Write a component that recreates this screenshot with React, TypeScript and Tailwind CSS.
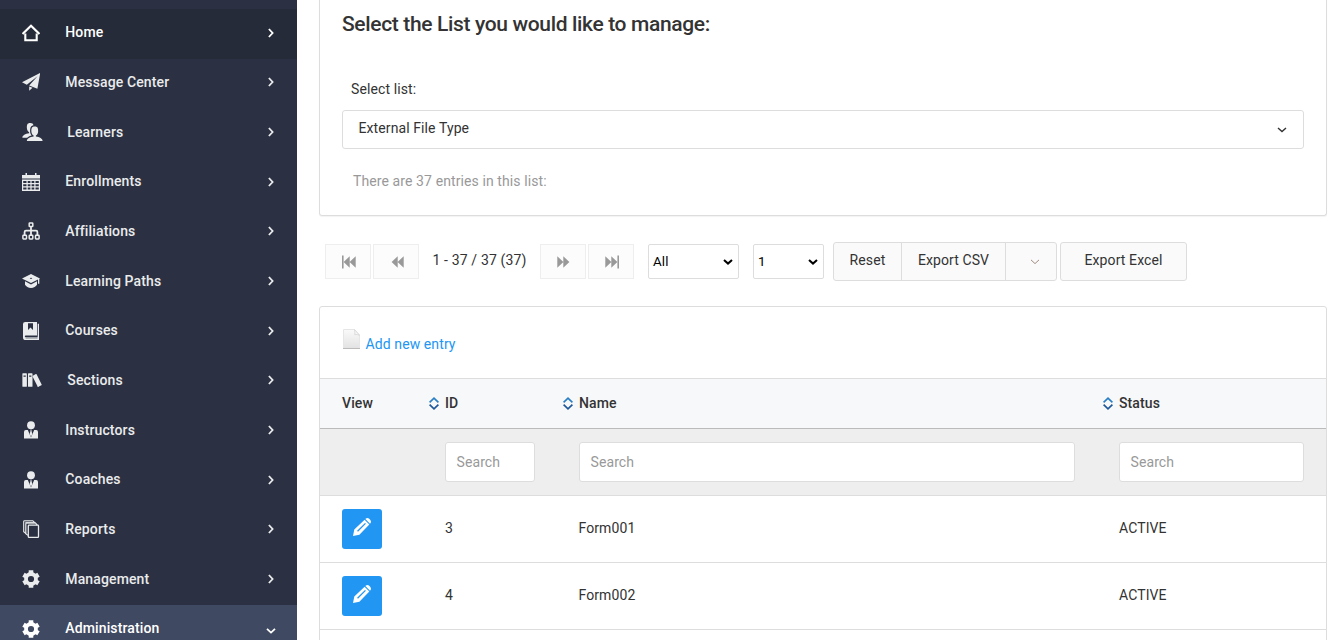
import React from 'react';
import { ImBooks, ImUsers } from 'react-icons/im';

type IconProps = { className?: string };

const HomeIcon = ({ className }: IconProps) => (
  <svg viewBox="0 0 18 18" className={className} fill="none" stroke="currentColor" strokeWidth="2.1">
    <path d="M0.600 10 9 1.800l8.400 8.200" />
    <path d="M3.300 9.600v6.600h11.400V9.600" />
  </svg>
);

const PlaneIcon = ({ className }: IconProps) => (
  <svg viewBox="0 0 18 18" className={className} fill="currentColor">
    <path d="M18.200 0 0 9.200l4.800 2.500L15.500 3.200 7.200 12.600l8.200 3.200z" />
    <path d="M7.200 13.500v4.200l3.300-3z" />
  </svg>
);

const CalendarIcon = ({ className }: IconProps) => (
  <svg viewBox="0 0 18 18" className={className} fill="currentColor">
    <path d="M3.500 0h1.500v3H3.500zM13 0h1.500v3H13z" />
    <path
      fillRule="evenodd"
      d="M0 2h18v3.600H0zM0 6.500h18V18H0zM1.200 7.900v2.200h3.300V7.900zM5.700 7.900v2.200h2.700V7.900zM9.600 7.900v2.200h2.700V7.900zM13.500 7.900v2.200h3.300V7.900zM1.200 11.200v2.100h3.300v-2.100zM5.700 11.200v2.100h2.700v-2.100zM9.600 11.200v2.100h2.700v-2.100zM13.500 11.200v2.100h3.300v-2.100zM1.200 14.400v2.100h3.300v-2.100zM5.700 14.400v2.100h2.700v-2.100zM9.600 14.400v2.100h2.700v-2.100zM13.500 14.400v2.100h3.300v-2.100z"
    />
  </svg>
);

const TreeIcon = ({ className }: IconProps) => (
  <svg viewBox="0 0 18 18" className={className} fill="none" stroke="currentColor" strokeWidth="1.5">
    <rect x="7.200" y="0.900" width="3.600" height="3.600" rx="0.600" />
    <rect x="0.900" y="13.300" width="3.600" height="3.600" rx="0.600" />
    <rect x="7.200" y="13.300" width="3.600" height="3.600" rx="0.600" />
    <rect x="13.500" y="13.300" width="3.600" height="3.600" rx="0.600" />
    <path d="M9 4.500v9M2.600 13.300V10q0-1.400 1.400-1.400h10q1.400 0 1.400 1.400v3.300" strokeWidth="1.800" />
  </svg>
);

const GraduationIcon = ({ className }: IconProps) => (
  <svg viewBox="0 0 18 18" className={className} fill="currentColor">
    <path d="M9 1.900 0 6.400l9 4.500 7-3.400v4.300h1.300V6.900l.7-.5z" />
    <path d="M3 9.300v3.400c1.200 1.900 3.300 3.200 6 3.200s4.800-1.300 6-3.200V9.300l-6 3.100z" />
    <ellipse cx="9" cy="6.300" rx="1.200" ry="0.500" fill="#2b3142" />
  </svg>
);

const CourseIcon = ({ className }: IconProps) => (
  <svg viewBox="0 0 18 18" className={className}>
    <path d="M3.200 0H15v13.400H3.700q-.9 0-.9.900t.9.900h12V1.800H17V18H3.800Q1 18 1 15.400V2q0-2 2.200-2z" fill="currentColor" />
    <path d="M6 1.200h5v6.700L8.500 5.500 6 7.900z" fill="#2b3142" />
    <path d="M3.600 16.100h12" stroke="#2b3142" strokeWidth="0.500" />
  </svg>
);

const PersonIcon = ({ className }: IconProps) => (
  <svg viewBox="0 0 18 18" className={className} fill="currentColor">
    <circle cx="9" cy="4.200" r="3.900" />
    <path d="M8.200 8.400h1.600l-.4 1.200.900 3.400L9 16l-1.300-3 .9-3.400z" />
    <path d="M2 17.500V11q0-2 1.800-2h2L9 16.500 12.200 9h2Q16 9 16 11v6.500z" />
  </svg>
);

const ReportsIcon = ({ className }: IconProps) => (
  <svg viewBox="0 0 18 18" className={className} fill="none" stroke="currentColor" strokeWidth="1.300">
    <path d="M2.600 1.800h8.800l1.500 1.600H4z" fill="#a9acb2" stroke="none" />
    <rect x="6.300" y="5.200" width="10.200" height="12.200" rx="0.800" />
    <path d="M6 15.400 3.800 13.700V3.800q0-.9.900-.9h8.600l1.900 2.100" strokeWidth="1.200" />
    <path d="M4 13.500l-2.300-1.800V1.600q0-.9.900-.9h8.200l2.200 2.200" strokeWidth="1.100" />
  </svg>
);

const GearIcon = ({ className }: IconProps) => (
  <svg viewBox="0 0 18 18" className={className} fill="none" stroke="currentColor">
    <circle cx="9" cy="9" r="5" strokeWidth="3.800" />
    <path
      d="M9 .300V3.500M9 14.500v3.200M1.470 4.650l2.770 1.600M13.760 11.750l2.770 1.600M1.470 13.350l2.770-1.600M13.760 6.250l2.770-1.600"
      strokeWidth="4.600"
    />
  </svg>
);

const PencilIcon = ({ className }: IconProps) => (
  <svg viewBox="0 0 18 18" className={className} fill="currentColor">
    <path fillRule="evenodd" d="M11.600 1.800 1.300 11.600 0 18l6.400-1.300L16.300 6.500zM12 4.900l.9.900-7.900 7.900-.9-.9z" />
    <path d="m12.400 1.100.500-.500q1.700-1.300 3.600.500l.6.600q1.500 1.700.400 3.400l-.5.600z" />
  </svg>
);

const SkipIcon = ({ bar, flip }: { bar?: boolean; flip?: boolean }) => (
  <svg viewBox="0 0 16 14" className={`w-4 h-3.5 ${flip ? '-scale-x-100' : ''}`} fill="#999">
    {bar && <path d="M1 0.500h1.600v13H1z" />}
    <path d="M8.700 1.200v11.600L2.600 7zM14.700 1.200v11.600L8.600 7z" />
  </svg>
);

const SortIcon = () => (
  <svg viewBox="0 0 10 13" className="w-2.5 h-[13px] shrink-0" fill="none" strokeWidth="1.700">
    <path d="M0.600 5.300 5 1.200l4.400 4.100" stroke="#2a7fc4" />
    <path d="M0.600 7.700 5 11.800l4.400-4.100" stroke="#1e5799" />
  </svg>
);

const Chevron = ({ className, width = 1.5 }: IconProps & { width?: number }) => (
  <svg viewBox="0 0 10 6" className={className} fill="none" stroke="currentColor" strokeWidth={width}>
    <path d="M1 0.900 5 4.600l4-3.700" />
  </svg>
);

const menu = [
  { icon: HomeIcon, name: 'Home', state: 'active' },
  { icon: PlaneIcon, name: 'Message Center' },
  { icon: ImUsers, name: 'Learners', wide: true },
  { icon: CalendarIcon, name: 'Enrollments' },
  { icon: TreeIcon, name: 'Affiliations' },
  { icon: GraduationIcon, name: 'Learning Paths' },
  { icon: CourseIcon, name: 'Courses' },
  { icon: ImBooks, name: 'Sections', wide: true },
  { icon: PersonIcon, name: 'Instructors' },
  { icon: PersonIcon, name: 'Coaches' },
  { icon: ReportsIcon, name: 'Reports' },
  { icon: GearIcon, name: 'Management' },
  { icon: GearIcon, name: 'Administration', state: 'open' },
];

const columns = ['ID', 'Name', 'Status'];

const entries = [
  { id: 3, name: 'Form001', status: 'ACTIVE' },
  { id: 4, name: 'Form002', status: 'ACTIVE' },
];

const itemColors: Record<string, string> = {
  active: 'bg-[#262b39] text-white',
  open: 'bg-[#3f4961] text-white',
};

function Sidebar() {
  return (
    <nav className="w-[297px] h-full shrink-0 bg-[#2b3142] pt-[9px] overflow-hidden">
      {menu.map((item) => (
        <a
          key={item.name}
          className={`flex items-center h-[49.670px] pl-[22px] pr-[21px] pb-[2px] ${itemColors[item.state ?? ''] ?? 'text-[#eaebec]'}`}
        >
          <item.icon className={`${item.wide ? 'w-[21px] mr-[24.3px]' : 'w-[18px] mr-[25.3px]'} h-[18px] shrink-0`} />
          <span className="flex-1 pb-px text-sm font-medium tracking-[0.13px]">{item.name}</span>
          <Chevron className={`w-2.5 h-1.5 ${item.state === 'open' ? 'mt-1' : '-rotate-90'}`} width={1.8} />
        </a>
      ))}
    </nav>
  );
}

function PagerButton({ children }: { children: React.ReactNode }) {
  return (
    <button className="w-[46px] h-[35px] flex items-center justify-center pl-px border border-[#eee] bg-[#fcfcfc]">
      {children}
    </button>
  );
}

function SelectBox({ label, className }: { label: string; className: string }) {
  return (
    <div className={`h-[35px] flex items-center justify-between pl-1 pr-[5px] border border-[#ddd] rounded-xs text-[13.330px] text-black ${className}`}>
      <span>{label}</span>
      <Chevron className="w-2.5 h-1.5" width={2} />
    </div>
  );
}

function Toolbar() {
  return (
    <div className="flex items-center h-[39px] mt-[26px] ml-1.5 text-sm">
      <PagerButton><SkipIcon bar /></PagerButton>
      <div className="w-0.5" />
      <PagerButton><SkipIcon /></PagerButton>
      <span className="w-[121px] pb-[3px] text-center tracking-[0.15px]">1 - 37 / 37 (37)</span>
      <PagerButton><SkipIcon flip /></PagerButton>
      <div className="w-0.5" />
      <PagerButton><SkipIcon bar flip /></PagerButton>
      <SelectBox label="All" className="w-[91px] ml-[14px]" />
      <SelectBox label="1" className="w-[71px] ml-[14px]" />
      <div className="flex h-full ml-[9px] border border-[#ddd] rounded-[3px] bg-[#fafafa] divide-x divide-[#ddd]">
        <button className="w-[68px] pb-[3px]">Reset</button>
        <button className="w-[104px] pb-[3px]">Export CSV</button>
        <button className="w-[50px] flex items-center justify-center pl-2 text-[#a08a80]">
          <Chevron className="w-2.5 h-1.5" width={1} />
        </button>
      </div>
      <button className="h-full w-[127px] ml-[3px] pb-[3px] border border-[#ddd] rounded-[3px] bg-[#fafafa]">Export Excel</button>
    </div>
  );
}

function ListSelector() {
  return (
    <section className="h-[216px] px-[22px] border border-t-0 border-[#ddd] rounded-b-[3px] shadow-[0_1px_1px_rgba(0,0,0,0.05)]">
      <h5 className="pt-2 text-[21px] leading-8 font-medium tracking-[-0.350px]">Select the List you would like to manage:</h5>
      <label className="block mt-[39px] ml-[9px] text-sm">Select list:</label>
      <div className="flex items-center justify-between h-[39px] mt-[11px] pl-[15.500px] pr-4 border border-[#ddd] rounded-[3px] text-sm">
        <span className="pb-[3px]">External File Type</span>
        <Chevron className="w-2.5 h-1.5" width={1.4} />
      </div>
      <p className="mt-[22px] ml-[11px] text-sm text-[#999]">There are 37 entries in this list:</p>
    </section>
  );
}

function EntriesTable() {
  const row = 'grid grid-cols-[103px_134px_540px_229px] items-center';
  return (
    <section className="mt-[25px] border border-[#ddd] rounded-t-[3px] text-sm">
      <div className="flex h-[71px] pl-[23px] pt-[22px]">
        <svg viewBox="0 0 18 20" className="w-[18px] h-5 mr-[4.500px]">
          <defs>
            <linearGradient id="sheet" x1="0" y1="0" x2="0" y2="1">
              <stop offset="0" stopColor="#fafafa" />
              <stop offset="1" stopColor="#e2e2e2" />
            </linearGradient>
          </defs>
          <path d="M0.500 0.500h11L16.500 6v13.500H.5z" fill="url(#sheet)" stroke="#e6e6e6" />
          <path d="M11.500.5q.8 4 .2 5.200 2.500-.6 4.800.6z" fill="#f6f6f6" stroke="#d5d5d5" strokeWidth="0.800" />
          <path d="M0 19.500h17" stroke="#bbb" />
        </svg>
        <a className="pt-[5px] text-[#2196f3]">Add new entry</a>
      </div>
      <div className={`${row} h-[51px] border-t border-t-[#ddd] border-b border-b-[#bbb] bg-[#f7f8fa] font-medium`}>
        <span className="pl-[22px] pb-px">View</span>
        {columns.map((col) => (
          <span key={col} className="flex items-center gap-1.5 pl-1.5">
            <SortIcon />
            <span className="pb-px">{col}</span>
          </span>
        ))}
      </div>
      <div className={`${row} h-[67px] border-b border-[#ddd] bg-[#eee]`}>
        <span />
        {columns.map((col) => (
          <div key={col} className="px-[22px]">
            <input
              placeholder="Search"
              className="block w-full h-10 px-[10.500px] border border-[#ddd] rounded-[3px] bg-white tracking-[0.1px] placeholder:text-[#999]"
            />
          </div>
        ))}
      </div>
      {entries.map((entry) => (
        <div key={entry.id} className={`${row} h-[67px] border-b border-[#ddd]`}>
          <div className="pl-[22px]">
            <button className="flex items-center justify-center size-10 pb-1 rounded-[3px] bg-[#2196f3] text-white">
              <PencilIcon className="size-[18px]" />
            </button>
          </div>
          <span className="pl-[22px] pb-0.5">{entry.id}</span>
          <span className="pl-[21.500px] pb-0.5">{entry.name}</span>
          <span className="pl-[22px] pb-0.5">{entry.status}</span>
        </div>
      ))}
      <div className="h-12" />
    </section>
  );
}

export default function App() {
  return (
    <div className="flex w-[1334px] h-[640px] overflow-hidden bg-white font-[Roboto,sans-serif] text-[#333] tracking-[0.1px]">
      <Sidebar />
      <main className="w-[1008px] ml-[22px]">
        <ListSelector />
        <Toolbar />
        <EntriesTable />
      </main>
    </div>
  );
}
